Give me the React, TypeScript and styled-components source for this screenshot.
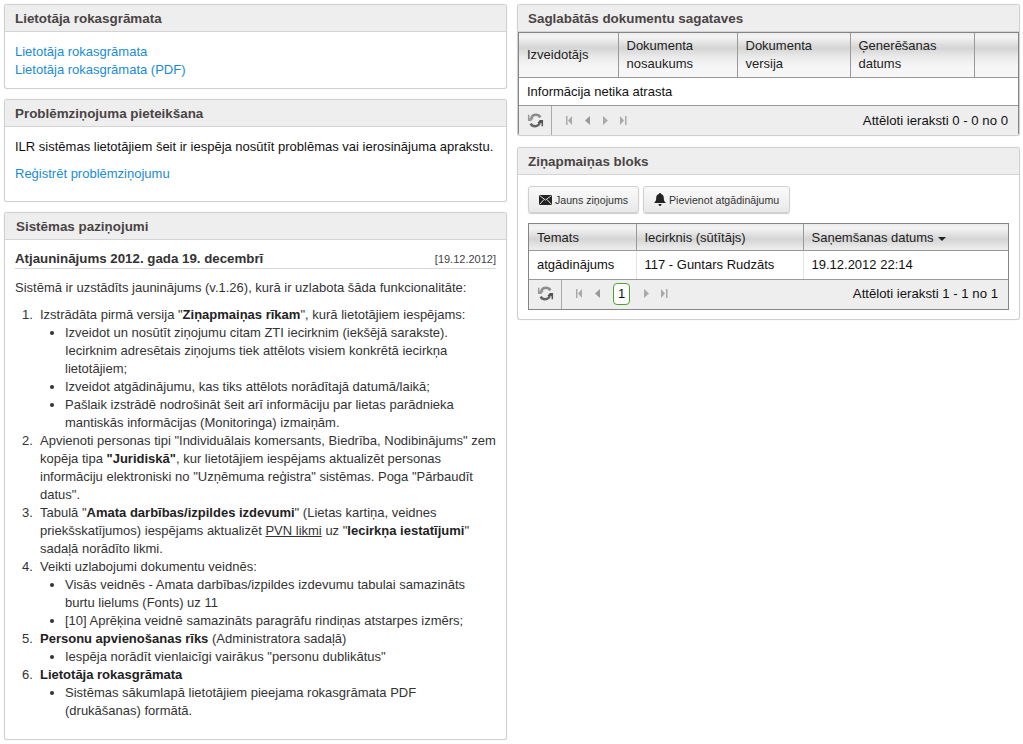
import styled, { createGlobalStyle } from "styled-components";

const GlobalStyle = createGlobalStyle`
  html, body {
    margin: 0;
    padding: 0;
    background: #fff;
    font-family: "Liberation Sans", Arial, sans-serif;
    font-size: 13px;
    color: #222;
  }
`;

const Page = styled.div`
  display: grid;
  grid-template-columns: 503px 503px;
  column-gap: 10px;
  align-items: start;
  padding: 4px 3px 0 4px;
  width: 1016px;
  height: 740px;
`;

const Column = styled.div<{ $gap: number }>`
  display: flex;
  flex-direction: column;
  gap: ${(p) => p.$gap}px;
`;

const Panel = styled.section<{ $height: number }>`
  box-sizing: border-box;
  height: ${(p) => p.$height}px;
  border: 1px solid #d0d0d0;
  border-radius: 3px;
  background: #fff;
  box-shadow: 0 0 1px #ccc;
  overflow: hidden;
`;

const PanelTitle = styled.h3<{ $indent?: number }>`
  margin: 0;
  box-sizing: border-box;
  height: 27px;
  padding: 6px 10px 0 ${(p) => p.$indent ?? 10}px;
  background: #eeeeee;
  border-bottom: 1px solid #d4d4d4;
  font-size: 13.4px;
  line-height: 15px;
  font-weight: bold;
  color: #4a4444;
`;

const PanelBody = styled.div`
  padding: 11px 10px 0;
  font-size: 13px;
  line-height: 18px;
`;

const Link = styled.a`
  display: block;
  color: #1a8bd8;
  text-decoration: none;
`;

const Paragraph = styled.p<{ $bottom: number }>`
  margin: 0 0 ${(p) => p.$bottom}px;
  color: #111;
`;

const ArticleHead = styled.div`
  display: flex;
  justify-content: space-between;
  align-items: baseline;
  margin-top: -1px;
  border-bottom: 1px solid #d8d8d8;
  line-height: 17px;
  height: 18px;
`;

const ArticleTitle = styled.strong`
  font-size: 13.3px;
  color: #333;
`;

const ArticleDate = styled.span`
  font-size: 11px;
  color: #444;
`;

const ArticleText = styled.div`
  color: #333;
  font-size: 13px;
  line-height: 18px;
  padding-top: 10px;
  p {
    color: #333;
  }
  b {
    color: #222;
  }
`;

const NumberedList = styled.ol`
  margin: 0;
  padding: 0 0 0 25px;
  & > li::marker {
    content: counter(list-item) ".\\00a0\\00a0";
  }
`;

const BulletList = styled.ul`
  margin: 0;
  padding: 0 3px 0 25px;
  list-style: disc;
`;

const Under = styled.span`
  text-decoration: underline;
`;

const Grid = styled.div`
  border: 1px solid #858585;
  background: #fff;
  color: #111;
  font-size: 13px;
`;

const GridTable = styled.table`
  border-collapse: collapse;
  table-layout: fixed;
  width: 100%;
`;

const HeadCell = styled.th<{ $width?: number; $height: number }>`
  box-sizing: border-box;
  width: ${(p) => (p.$width ? `${p.$width}px` : "auto")};
  height: ${(p) => p.$height}px;
  padding: ${(p) => (p.$height < 30 ? "2px 8px 0" : "0 8px")};
  text-align: left;
  font-weight: normal;
  line-height: 18px;
  border-right: 1px solid #999;
  border-bottom: 1px solid #999;
  background: linear-gradient(#ececec 0, #f4f4f4 4px, #d4d4d4 15px, #eaeaea 24px, #f6f6f6 34px);
  color: #222;
  &:last-child {
    border-right: 0;
  }
`;

const BodyCell = styled.td<{ $height: number; $divider?: boolean }>`
  box-sizing: border-box;
  height: ${(p) => p.$height}px;
  padding: 0 8px;
  border-right: ${(p) => (p.$divider ? "1px solid #e3e3e3" : "0")};
`;

const SortArrow = styled.span`
  display: inline-block;
  margin-left: 4px;
  border-left: 4px solid transparent;
  border-right: 4px solid transparent;
  border-top: 4px solid #222;
  vertical-align: 1px;
`;

const GridFooter = styled.div<{ $lift?: boolean }>`
  display: flex;
  align-items: center;
  box-sizing: border-box;
  height: 30px;
  padding-bottom: ${(p) => (p.$lift ? 2 : 0)}px;
  border-top: 1px solid #999;
  background: #eeeeee;
`;

const RefreshCell = styled.div<{ $lift?: boolean }>`
  display: flex;
  align-items: center;
  justify-content: center;
  align-self: stretch;
  width: 32px;
  margin-bottom: ${(p) => (p.$lift ? -2 : 0)}px;
  padding-bottom: ${(p) => (p.$lift ? 2 : 0)}px;
  border-right: 1px solid #aaa;
`;

const Pager = styled.div`
  display: flex;
  align-items: center;
  padding-left: 14px;
`;

const PagerIcon = styled.svg<{ $after: number }>`
  display: block;
  margin-right: ${(p) => p.$after}px;
`;

const CurrentPage = styled.span`
  display: block;
  box-sizing: border-box;
  width: 17px;
  height: 22px;
  margin: 0 13px 0 1px;
  border: 1px solid #4aa52e;
  border-radius: 4px;
  background: #fff;
  text-align: center;
  line-height: 20px;
  font-size: 13px;
  color: #111;
`;

const Records = styled.span`
  margin-left: auto;
  padding-right: 10px;
  font-size: 13.2px;
`;

const Toolbar = styled.div`
  display: flex;
  gap: 4px;
  padding: 11px 10px 10px;
`;

const ToolButton = styled.button`
  display: flex;
  align-items: center;
  gap: 3px;
  box-sizing: border-box;
  height: 27px;
  padding: 0 10px;
  border: 1px solid #d0d0d0;
  border-radius: 3px;
  background: linear-gradient(#fafafa, #e9e9e9);
  box-shadow: 0 1px 1px #ccc;
  font-family: inherit;
  font-size: 10.6px;
  color: #333;
`;

const GridWrap = styled.div`
  padding: 0 10px;
`;

const RefreshIcon = () => (
  <svg width="17" height="17" viewBox="0 0 18 18" fill="none">
    <path d="M4.500 7C5 4.300 7 3 9.500 3c2 0 3.700.9 4.700 2.700" stroke="#8c8c8c" strokeWidth="2.600" />
    <path d="M13.500 11c-.5 2.700-2.500 4-5 4-2 0-3.700-.9-4.700-2.700" stroke="#666" strokeWidth="2.600" />
    <path d="M1 3h1.600v3.400H7L4.500 9.500H1z" fill="#9a9a9a" />
    <path d="M17 15h-1.600v-3.400H11l2.500-3.100H17z" fill="#555" />
  </svg>
);

type PageKind = "first" | "prev" | "next" | "last";

const PageIcon = ({ kind, tone, after = 11 }: { kind: PageKind; tone: string; after?: number }) => (
  <PagerIcon $after={after} width="7" height="9" viewBox="0 0 7 9" fill={tone}>
    {kind === "first" && <path d="M0 0h1.500v9H0zM6 0v9L2 4.500z" />}
    {kind === "prev" && <path d="M6 0v9L1 4.500z" />}
    {kind === "next" && <path d="M1 0v9l5-4.500z" />}
    {kind === "last" && <path d="M0 0v9l4-4.500zM5 0h1.500v9H5z" />}
  </PagerIcon>
);

const MailIcon = () => (
  <svg width="13" height="10" viewBox="0 0 13 10">
    <path d="M0 0h13v10H0z" fill="#222" />
    <path d="M.5.500l6 4.500 6-4.500M.5 9.500L5 4.500M12.500 9.500L8 4.500" stroke="#ddd" strokeWidth="1" fill="none" />
  </svg>
);

const BellIcon = () => (
  <svg width="12" height="13" viewBox="0 0 12 13">
    <path d="M6 0c.7 0 1 .4 1 1 2 .5 2.800 2 2.800 4 0 2.500.7 3.500 2.200 5H0c1.500-1.500 2.200-2.500 2.200-5 0-2 .8-3.500 2.800-4 0-.6.300-1 1-1z" fill="#222" />
    <path d="M4.500 11h3c0 1.200-.7 2-1.500 2s-1.500-.8-1.500-2z" fill="#222" />
  </svg>
);

const FooterPager = ({ current }: { current?: number }) => (
  <Pager>
    <PageIcon kind="first" tone="#aaa" />
    <PageIcon kind="prev" tone="#999" />
    {current && <CurrentPage>{current}</CurrentPage>}
    <PageIcon kind="next" tone="#aaa" />
    <PageIcon kind="last" tone="#aaa" after={0} />
  </Pager>
);

export default function App() {
  return (
    <>
      <GlobalStyle />
      <Page>
        <Column $gap={10}>
          <Panel $height={85}>
            <PanelTitle>Lietotāja rokasgrāmata</PanelTitle>
            <PanelBody>
              <Link href="#">Lietotāja rokasgrāmata</Link>
              <Link href="#">Lietotāja rokasgrāmata (PDF)</Link>
            </PanelBody>
          </Panel>
          <Panel $height={103}>
            <PanelTitle>Problēmziņojuma pieteikšana</PanelTitle>
            <PanelBody>
              <Paragraph $bottom={9}>ILR sistēmas lietotājiem šeit ir iespēja nosūtīt problēmas vai ierosinājuma aprakstu.</Paragraph>
              <Link href="#">Reģistrēt problēmziņojumu</Link>
            </PanelBody>
          </Panel>
          <Panel $height={528}>
            <PanelTitle $indent={11}>Sistēmas paziņojumi</PanelTitle>
            <PanelBody>
              <ArticleHead>
                <ArticleTitle>Atjauninājums 2012. gada 19. decembrī</ArticleTitle>
                <ArticleDate>[19.12.2012]</ArticleDate>
              </ArticleHead>
              <ArticleText>
                <Paragraph $bottom={9}>Sistēmā ir uzstādīts jauninājums (v.1.26), kurā ir uzlabota šāda funkcionalitāte:</Paragraph>
                <NumberedList>
                  <li>
                    Izstrādāta pirmā versija "<b>Ziņapmaiņas rīkam</b>", kurā lietotājiem iespējams:
                    <BulletList>
                      <li>Izveidot un nosūtīt ziņojumu citam ZTI iecirknim (iekšējā sarakste). Iecirknim adresētais ziņojums tiek attēlots visiem konkrētā iecirkņa lietotājiem;</li>
                      <li>Izveidot atgādinājumu, kas tiks attēlots norādītajā datumā/laikā;</li>
                      <li>Pašlaik izstrādē nodrošināt šeit arī informāciju par lietas parādnieka mantiskās informācijas (Monitoringa) izmaiņām.</li>
                    </BulletList>
                  </li>
                  <li>
                    Apvienoti personas tipi "Individuālais komersants, Biedrība, Nodibinājums" zem kopēja tipa <b>"Juridiskā"</b>, kur lietotājiem iespējams aktualizēt personas informāciju elektroniski no "Uzņēmuma reģistra" sistēmas. Poga "Pārbaudīt datus".
                  </li>
                  <li>
                    Tabulā "<b>Amata darbības/izpildes izdevumi</b>" (Lietas kartiņa, veidnes priekšskatījumos) iespējams aktualizēt <Under>PVN likmi</Under> uz "<b>Iecirkņa iestatījumi</b>" sadaļā norādīto likmi.
                  </li>
                  <li>
                    Veikti uzlabojumi dokumentu veidnēs:
                    <BulletList>
                      <li>Visās veidnēs - Amata darbības/izpildes izdevumu tabulai samazināts burtu lielums (Fonts) uz 11</li>
                      <li>[10] Aprēķina veidnē samazināts paragrāfu rindiņas atstarpes izmērs;</li>
                    </BulletList>
                  </li>
                  <li>
                    <b>Personu apvienošanas rīks</b> (Administratora sadaļā)
                    <BulletList>
                      <li>Iespēja norādīt vienlaicīgi vairākus "personu dublikātus"</li>
                    </BulletList>
                  </li>
                  <li>
                    <b>Lietotāja rokasgrāmata</b>
                    <BulletList>
                      <li>Sistēmas sākumlapā lietotājiem pieejama rokasgrāmata PDF (drukāšanas) formātā.</li>
                    </BulletList>
                  </li>
                </NumberedList>
              </ArticleText>
            </PanelBody>
          </Panel>
        </Column>
        <Column $gap={11}>
          <Panel $height={132}>
            <PanelTitle>Saglabātās dokumentu sagataves</PanelTitle>
            <Grid>
              <GridTable>
                <thead>
                  <tr>
                    <HeadCell $width={99} $height={44}>Izveidotājs</HeadCell>
                    <HeadCell $width={119} $height={44}>Dokumenta nosaukums</HeadCell>
                    <HeadCell $width={113} $height={44}>Dokumenta versija</HeadCell>
                    <HeadCell $width={124} $height={44}>Ģenerēšanas datums</HeadCell>
                    <HeadCell $height={44} />
                  </tr>
                </thead>
                <tbody>
                  <tr>
                    <BodyCell colSpan={5} $height={28}>Informācija netika atrasta</BodyCell>
                  </tr>
                </tbody>
              </GridTable>
              <GridFooter>
                <RefreshCell><RefreshIcon /></RefreshCell>
                <FooterPager />
                <Records>Attēloti ieraksti 0 - 0 no 0</Records>
              </GridFooter>
            </Grid>
          </Panel>
          <Panel $height={173}>
            <PanelTitle>Ziņapmaiņas bloks</PanelTitle>
            <Toolbar>
              <ToolButton><MailIcon />Jauns ziņojums</ToolButton>
              <ToolButton><BellIcon />Pievienot atgādinājumu</ToolButton>
            </Toolbar>
            <GridWrap>
              <Grid>
                <GridTable>
                  <thead>
                    <tr>
                      <HeadCell $width={107} $height={26}>Temats</HeadCell>
                      <HeadCell $width={167} $height={26}>Iecirknis (sūtītājs)</HeadCell>
                      <HeadCell $height={26}>Saņemšanas datums<SortArrow /></HeadCell>
                    </tr>
                  </thead>
                  <tbody>
                    <tr>
                      <BodyCell $height={29} $divider>atgādinājums</BodyCell>
                      <BodyCell $height={29} $divider>117 - Guntars Rudzāts</BodyCell>
                      <BodyCell $height={29}>19.12.2012 22:14</BodyCell>
                    </tr>
                  </tbody>
                </GridTable>
                <GridFooter $lift>
                  <RefreshCell $lift><RefreshIcon /></RefreshCell>
                  <FooterPager current={1} />
                  <Records>Attēloti ieraksti 1 - 1 no 1</Records>
                </GridFooter>
              </Grid>
            </GridWrap>
          </Panel>
        </Column>
      </Page>
    </>
  );
}
